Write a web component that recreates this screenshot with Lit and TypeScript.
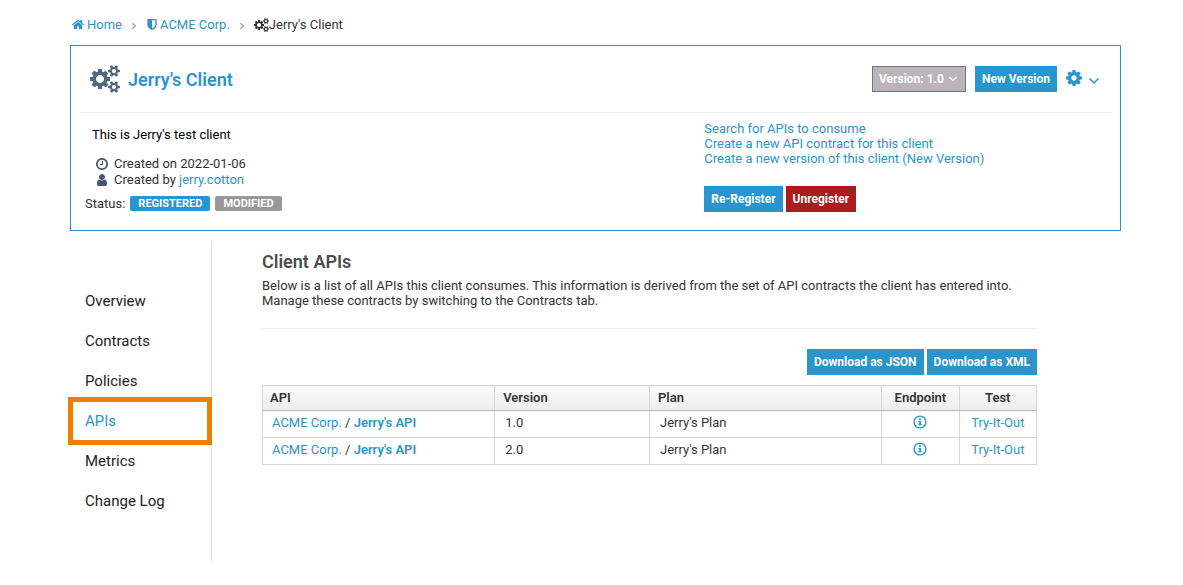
import { LitElement, html, svg, css } from "lit";
import { customElement, state } from "lit/decorators.js";

interface IconShape {
  box: string;
  path: string;
}

const icons: Record<string, IconShape> = {
  home: {
    box: "64 0 1664 1792",
    path: "M1472 992v480q0 26-19 45t-45 19h-384v-384h-256v384h-384q-26 0-45-19t-19-45v-480q0-1 .5-3t.5-3l575-474 575 474q1 2 1 6zm223-69l-62 74q-8 9-21 11h-3q-13 0-21-7l-692-577-692 577q-12 8-24 7-13-2-21-11l-62-74q-8-10-7-23.5t11-21.5l719-599q32-26 76-26t76 26l244 204v-195q0-14 9-23t23-9h192q14 0 23 9t9 23v408l219 182q10 8 11 21.5t-7 23.5z",
  },
  shield: {
    box: "256 0 1280 1792",
    path: "M1344 960v-640h-448v1137q119-63 213-137 235-184 235-360zm192-768v768q0 86-33.5 170.5t-83 150-118 127.5-126.5 103-121 77.5-89.5 49.5-42.5 20q-12 6-26 6t-26-6q-16-7-42.5-20t-89.5-49.5-121-77.5-126.5-103-118-127.5-83-150-33.5-170.5v-768q0-26 19-45t45-19h1152q26 0 45 19t19 45z",
  },
  cogs: {
    box: "-64 0 1920 1792",
    path: "M832 896q0-106-75-181t-181-75-181 75-75 181 75 181 181 75 181-75 75-181zm768 512q0-52-38-90t-90-38-90 38-38 90q0 53 37.5 90.5t90.5 37.5 90.5-37.5 37.5-90.5zm0-1024q0-52-38-90t-90-38-90 38-38 90q0 53 37.5 90.5t90.5 37.5 90.5-37.5 37.5-90.5zm-384 421v185q0 10-7 19.5t-16 10.5l-155 24q-11 35-32 76 34 48 90 115 7 11 7 20 0 12-7 19-23 30-82.5 89.5t-78.5 59.5q-11 0-21-7l-115-90q-37 19-77 31-11 108-23 155-7 24-30 24h-186q-11 0-20-7.5t-10-17.5l-23-153q-34-10-75-31l-118 89q-7 7-20 7-11 0-21-8-144-133-144-160 0-9 7-19 10-14 41-53t47-61q-23-44-35-82l-152-24q-10-1-17-9.5t-7-19.5v-185q0-10 7-19.5t16-10.5l155-24q11-35 32-76-34-48-90-115-7-11-7-20 0-12 7-20 22-30 82-89t79-59q11 0 21 7l115 90q34-18 77-32 11-108 23-154 7-24 30-24h186q11 0 20 7.5t10 17.5l23 153q34 10 75 31l118-89q8-7 20-7 11 0 21 8 144 133 144 160 0 8-7 19-12 16-42 54t-45 60q23 48 34 82l152 23q10 2 17 10.5t7 19.5zm640 533v140q0 16-149 31-12 27-30 52 51 113 51 138 0 4-4 7-122 71-124 71-8 0-46-47t-52-68q-20 2-30 2t-30-2q-14 21-52 68t-46 47q-2 0-124-71-4-3-4-7 0-25 51-138-18-25-30-52-149-15-149-31v-140q0-16 149-31 13-29 30-52-51-113-51-138 0-4 4-7 4-2 35-20t59-34 30-16q8 0 46 46.5t52 67.5q20-2 30-2t30 2q51-71 92-112l6-2q4 0 124 70 4 3 4 7 0 25-51 138 17 23 30 52 149 15 149 31zm0-1024v140q0 16-149 31-12 27-30 52 51 113 51 138 0 4-4 7-122 71-124 71-8 0-46-47t-52-68q-20 2-30 2t-30-2q-14 21-52 68t-46 47q-2 0-124-71-4-3-4-7 0-25 51-138-18-25-30-52-149-15-149-31v-140q0-16 149-31 13-29 30-52-51-113-51-138 0-4 4-7 4-2 35-20t59-34 30-16q8 0 46 46.5t52 67.5q20-2 30-2t30 2q51-71 92-112l6-2q4 0 124 70 4 3 4 7 0 25-51 138 17 23 30 52 149 15 149 31z",
  },
  cog: {
    box: "128 128 1536 1536",
    path: "M1152 896q0-106-75-181t-181-75-181 75-75 181 75 181 181 75 181-75 75-181zm512-109v222q0 12-8 23t-20 13l-185 28q-19 54-39 91 35 50 107 138 10 12 10 25t-9 23q-27 37-99 108t-94 71q-12 0-26-9l-138-108q-44 23-91 38-16 136-29 186-7 28-36 28h-222q-14 0-24.5-8.5t-11.5-21.5l-28-184q-49-16-90-37l-141 107q-10 9-25 9-14 0-25-11-126-114-165-168-7-10-7-23 0-12 8-23 15-21 51-66.5t54-70.5q-27-50-41-99l-183-27q-13-2-21-12.5t-8-23.5v-222q0-12 8-23t19-13l186-28q14-46 39-92-40-57-107-138-10-12-10-24 0-10 9-23 26-36 98.5-107.5t94.5-71.5q13 0 26 10l138 107q44-23 91-38 16-136 29-186 7-28 36-28h222q14 0 24.5 8.5t11.5 21.5l28 184q49 16 90 37l142-107q9-9 24-9 13 0 25 10 129 119 165 170 7 8 7 22 0 12-8 23-15 21-51 66.5t-54 70.5q26 50 41 98l183 28q13 2 21 12.5t8 23.5z",
  },
  clock: {
    box: "128 128 1536 1536",
    path: "M1024 544v448q0 14-9 23t-23 9h-320q-14 0-23-9t-9-23v-64q0-14 9-23t23-9h224v-352q0-14 9-23t23-9h64q14 0 23 9t9 23zm416 352q0-148-73-273t-198-198-273-73-273 73-198 198-73 273 73 273 198 198 273 73 273-73 198-198 73-273zm224 0q0 209-103 385.5t-279.5 279.5-385.5 103-385.5-103-279.5-279.5-103-385.5 103-385.5 279.5-279.5 385.5-103 385.5 103 279.5 279.5 103 385.5z",
  },
  user: {
    box: "128 128 1536 1536",
    path: "M1536 1399q0 109-62.5 187t-150.5 78h-854q-88 0-150.5-78t-62.5-187q0-85 8.5-160.5t31.5-152 58.5-131 94-89 134.5-34.5q131 128 313 128t313-128q76 0 134.5 34.5t94 89 58.5 131 31.5 152 8.5 160.5zm-256-887q0 159-112.5 271.5t-271.5 112.5-271.5-112.5-112.5-271.5 112.5-271.5 271.5-112.5 271.5 112.5 112.5 271.5z",
  },
};

const icon = (name: string, cls: string) => html`<svg
  class="icon ${cls}"
  viewBox=${icons[name].box}
  aria-hidden="true"
>${svg`<path d=${icons[name].path}></path>`}</svg>`;

const chevron = (cls: string, d: string) => html`<svg
  class="chevron ${cls}"
  viewBox="0 0 12 12"
  aria-hidden="true"
>${svg`<path d=${d}></path>`}</svg>`;

const down = "M1.5 3.5L6 8L10.5 3.5";
const right = "M4 2.5L7.5 6L4 9.5";

const infoIcon = html`<svg class="info" viewBox="0 0 14 14" aria-hidden="true">
  <circle cx="7" cy="7" r="5.9"></circle>
  <path d="M6 3.4h2v1.5H6zM5.4 6H8v3.2h.8v1.1H5.3V9.2h.9V7.1h-.8z"></path>
</svg>`;

@customElement("app-root")
export class AppRoot extends LitElement {
  @state() private active = "APIs";

  private tabs = ["Overview", "Contracts", "Policies", "APIs", "Metrics", "Change Log"];

  private rows = [
    { org: "ACME Corp.", api: "Jerry's API", version: "1.0", plan: "Jerry's Plan" },
    { org: "ACME Corp.", api: "Jerry's API", version: "2.0", plan: "Jerry's Plan" },
  ];

  static styles = css`
    :host {
      display: block;
      box-sizing: border-box;
      padding: 16px 62px 24px 70px;
      background: #fff;
      color: #333;
      font-family: Roboto, "Liberation Sans", sans-serif;
      font-size: 13px;
      line-height: 15px;
    }
    * {
      box-sizing: border-box;
    }
    a {
      color: #2a95cd;
      text-decoration: none;
    }
    h1,
    h2,
    p,
    ul,
    ol {
      margin: 0;
      padding: 0;
      list-style: none;
    }
    .icon {
      flex: none;
      fill: currentColor;
    }
    .chevron {
      flex: none;
      width: 12px;
      height: 12px;
      fill: none;
      stroke: currentColor;
      stroke-width: 1.5;
    }
    .crumbs,
    .crumbs li,
    .crumbs a {
      display: flex;
      align-items: center;
    }
    .crumbs {
      height: 17px;
      padding-left: 2px;
      margin-bottom: 12px;
    }
    .crumbs a {
      gap: 3px;
    }
    .sep {
      width: 10px;
      height: 10px;
      margin: 2px 7px 0;
      color: #9c9c9c;
    }
    .home {
      width: 12px;
      height: 13px;
    }
    .shield {
      width: 10px;
      height: 13px;
      margin-left: 1px;
    }
    .crumb-cogs {
      width: 15px;
      height: 14px;
    }
    .card {
      border: 1px solid #2a95cd;
      padding: 0 8px 18px 9px;
    }
    .card-head {
      display: flex;
      align-items: center;
      height: 67px;
      padding-left: 10px;
      border-bottom: 1px solid #eee;
    }
    .title-cogs {
      width: 30px;
      height: 28px;
      color: #53677f;
    }
    h1 {
      flex: 1;
      padding: 1px 0 0 8px;
      font-size: 18px;
      line-height: 22px;
      font-weight: 600;
    }
    h2 {
      font-size: 18px;
      line-height: 22px;
      font-weight: 600;
      color: #4d4d4d;
    }
    button {
      display: inline-flex;
      align-items: center;
      height: 26px;
      padding: 0 7px;
      border: 0;
      background: #2a95cd;
      color: #fff;
      font: bold 12px/15px Roboto, "Liberation Sans", sans-serif;
      cursor: pointer;
    }
    button.version {
      gap: 4px;
      padding: 0 7px 0 6px;
      margin-right: 9px;
      border: 1px solid #6d7783;
      background: #bbb5b9;
    }
    button.danger {
      background: #ab1d1d;
    }
    button.settings {
      gap: 6px;
      padding: 0 12px 0 9px;
      background: none;
      color: #2a95cd;
    }
    .version .chevron {
      width: 10px;
      height: 10px;
    }
    .settings .icon {
      width: 16px;
      height: 16px;
      margin-bottom: 2px;
    }
    .settings .chevron {
      margin-top: 3px;
    }
    .card-body {
      display: grid;
      grid-template-columns: 121fr 79fr;
    }
    .about {
      padding: 14px 0 0 5px;
    }
    .about p {
      padding-left: 7px;
      margin-bottom: 13px;
      color: #000;
      line-height: 16px;
    }
    .meta {
      display: flex;
      align-items: center;
      padding-left: 11px;
      line-height: 16px;
      white-space: pre;
    }
    .meta .icon {
      width: 12px;
      height: 12px;
      margin-right: 6px;
      color: #46586b;
    }
    .status {
      display: flex;
      align-items: center;
      gap: 5px;
      margin-top: 8px;
    }
    .badge {
      padding: 0 8px;
      border-radius: 2px;
      background: #2a95cd;
      color: #fff;
      font-size: 11px;
      line-height: 15px;
      font-weight: bold;
    }
    .badge.muted {
      background: #999;
    }
    .tasks {
      padding-top: 8px;
    }
    .tasks a {
      display: block;
    }
    .buttons {
      display: flex;
      gap: 3px;
    }
    .tasks .buttons {
      margin-top: 20px;
    }
    .columns {
      display: flex;
      margin-top: 10px;
    }
    nav {
      flex: none;
      width: 142px;
      padding: 40px 0;
      border-right: 1px solid #ddd;
    }
    nav a {
      display: block;
      padding-left: 15px;
      color: #222;
      font-size: 15px;
      line-height: 40px;
    }
    nav a.active {
      position: relative;
      color: #2a95cd;
    }
    nav a.active::after {
      content: "";
      position: absolute;
      inset: -4px -1px -4px -2px;
      border: 5px solid #ef7d00;
    }
    main {
      flex: 1;
      padding: 10px 84px 0 50px;
    }
    .intro {
      padding: 5px 0 20px;
      border-bottom: 1px solid #eee;
    }
    main .buttons {
      justify-content: flex-end;
      margin: 20px 0 10px;
    }
    table {
      width: 100%;
      table-layout: fixed;
      border-collapse: collapse;
    }
    th,
    td {
      border: 1px solid #d6d6d6;
      text-align: left;
    }
    th {
      height: 25px;
      padding: 0 8px 2px;
      border-bottom-color: #b6b6b6;
      background: linear-gradient(#fafafa, #ededed);
      font-weight: 600;
    }
    td {
      height: 27px;
      padding: 0 10px 3px;
    }
    .wide {
      width: 30%;
    }
    .mid {
      width: 20%;
    }
    .narrow {
      width: 10%;
    }
    th:first-child {
      padding-left: 7px;
    }
    td:first-child {
      padding-left: 9px;
    }
    .center {
      padding-left: 0;
      padding-right: 0;
      text-align: center;
    }
    td b {
      font-weight: 600;
    }
    .info {
      display: block;
      width: 14px;
      height: 14px;
      margin: 0 auto 2px;
      fill: #2a95cd;
    }
    .info circle {
      fill: none;
      stroke: #2a95cd;
      stroke-width: 1.4;
    }
  `;

  render() {
    return html`
      <ol class="crumbs">
        <li><a href="#home">${icon("home", "home")}Home</a></li>
        <li>${chevron("sep", right)}<a href="#org">${icon("shield", "shield")}ACME Corp.</a></li>
        <li>${chevron("sep", right)}${icon("cogs", "crumb-cogs")}Jerry's Client</li>
      </ol>

      <section class="card">
        <header class="card-head">
          ${icon("cogs", "title-cogs")}
          <h1><a href="#client">Jerry's Client</a></h1>
          <button class="version">Version: 1.0 ${chevron("", down)}</button>
          <button>New Version</button>
          <button class="settings" aria-label="Settings">${icon("cog", "")}${chevron("", down)}</button>
        </header>
        <div class="card-body">
          <div class="about">
            <p>This is Jerry's test client</p>
            <div class="meta">${icon("clock", "")}Created on 2022-01-06</div>
            <div class="meta">${icon("user", "")}Created by <a href="#user">jerry.cotton</a></div>
            <div class="status">
              Status: <span class="badge">REGISTERED</span><span class="badge muted">MODIFIED</span>
            </div>
          </div>
          <div class="tasks">
            <a href="#search">Search for APIs to consume</a>
            <a href="#contract">Create a new API contract for this client</a>
            <a href="#version">Create a new version of this client (New Version)</a>
            <div class="buttons">
              <button>Re-Register</button>
              <button class="danger">Unregister</button>
            </div>
          </div>
        </div>
      </section>

      <div class="columns">
        <nav>
          ${this.tabs.map(
            (tab) => html`<a
              href="#"
              class=${tab === this.active ? "active" : ""}
              @click=${() => (this.active = tab)}
            >${tab}</a>`
          )}
        </nav>
        <main>
          <h2>Client APIs</h2>
          <p class="intro">
            Below is a list of all APIs this client consumes. This information is derived from the
            set of API contracts the client has entered into. Manage these contracts by switching to
            the Contracts tab.
          </p>
          <div class="buttons">
            <button>Download as JSON</button>
            <button>Download as XML</button>
          </div>
          <table>
            <thead>
              <tr>
                <th class="wide">API</th>
                <th class="mid">Version</th>
                <th class="wide">Plan</th>
                <th class="narrow center">Endpoint</th>
                <th class="narrow center">Test</th>
              </tr>
            </thead>
            <tbody>
              ${this.rows.map(
                (row) => html`<tr>
                  <td><a href="#org">${row.org}</a> / <a href="#api"><b>${row.api}</b></a></td>
                  <td>${row.version}</td>
                  <td>${row.plan}</td>
                  <td class="center"><a href="#endpoint" aria-label="Endpoint">${infoIcon}</a></td>
                  <td class="center"><a href="#try">Try-It-Out</a></td>
                </tr>`
              )}
            </tbody>
          </table>
        </main>
      </div>
    `;
  }
}
